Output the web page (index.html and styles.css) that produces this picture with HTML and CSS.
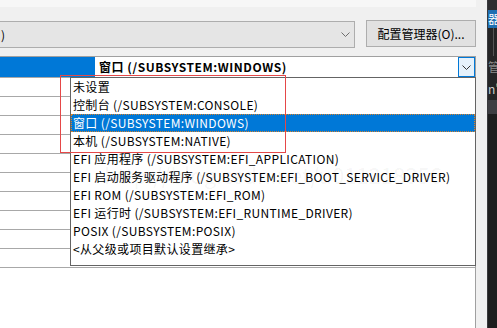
FILE: index.html
```html
<!DOCTYPE html>
<html lang="zh-CN">
<head>
  <meta charset="UTF-8" />
  <meta name="viewport" content="width=device-width, initial-scale=1.0" />
  <title>子系统</title>
  <link rel="stylesheet" href="styles.css">
</head>
<body>

  <div class="janela">
    <div class="principal">
      <div class="faixa-topo"></div>

      <!-- Barra de configuração -->
      <div class="barra">
        <div class="combo combo-plataforma">
          <span class="combo-texto">)</span>
          <svg class="seta" width="9" height="5" viewBox="0 0 9 5"><path d="M0.5 0.5 L4.5 4.5 L8.5 0.5" fill="none" stroke="#6d6d6d" stroke-width="1"/></svg>
        </div>
        <button class="botao">配置管理器(O)...</button>
      </div>

      <!-- Grade de propriedades -->
      <div class="grade">
        <div class="linha linha-ativa">
          <div class="nome nome-ativo"></div>
          <div class="valor">
            <span class="valor-texto">窗口 (/SUBSYSTEM:WINDOWS)</span>
            <span class="botao-seta">
              <svg width="9" height="5" viewBox="0 0 9 5"><path d="M0.5 0.5 L4.5 4.5 L8.5 0.5" fill="none" stroke="#333" stroke-width="1"/></svg>
            </span>
          </div>
        </div>
        <div class="linha"></div>
        <div class="linha"></div>
        <div class="linha"></div>
        <div class="linha"></div>
        <div class="linha"></div>
        <div class="linha"></div>
        <div class="linha"></div>
        <div class="linha"></div>
        <div class="linha"></div>
        <div class="linha"></div>
      </div>

      <!-- Lista aberta -->
      <ul class="lista">
        <li>未设置</li>
        <li>控制台 (/SUBSYSTEM:CONSOLE)</li>
        <li class="selecionado">窗口 (/SUBSYSTEM:WINDOWS)</li>
        <li>本机 (/SUBSYSTEM:NATIVE)</li>
        <li>EFI 应用程序 (/SUBSYSTEM:EFI_APPLICATION)</li>
        <li>EFI 启动服务驱动程序 (/SUBSYSTEM:EFI_BOOT_SERVICE_DRIVER)</li>
        <li>EFI ROM (/SUBSYSTEM:EFI_ROM)</li>
        <li>EFI 运行时 (/SUBSYSTEM:EFI_RUNTIME_DRIVER)</li>
        <li>POSIX (/SUBSYSTEM:POSIX)</li>
        <li>&lt;从父级或项目默认设置继承&gt;</li>
      </ul>

      <div class="marca">http://blog.csdn.net/u011218356</div>
      <div class="destaque"></div>
    </div>

    <!-- Painel escuro lateral -->
    <div class="painel">
      <div class="painel-topo"></div>
      <div class="painel-aba">器</div>
      <div class="painel-linhas"></div>
      <div class="painel-texto">管</div>
      <div class="painel-codigo">n<span class="aspas">"</span></div>
      <div class="painel-barra"></div>
      <div class="painel-fundo"></div>
    </div>
  </div>

</body>
</html>
```

FILE: styles.css
```css
body {
  margin: 0;
  font-family: "Noto Sans CJK SC", "Liberation Sans", sans-serif;
  font-size: 12px;
  background-color: #f0f0f0;
  overflow: hidden;
}

.janela {
  display: flex;
  width: 497px;
  height: 328px;
  overflow: hidden;
}

.principal {
  position: relative;
  width: 477px;
  padding-right: 11px;
  display: flex;
  flex-direction: column;
  background-color: #f0f0f0;
}

.faixa-topo {
  height: 7px;
  background-color: #f7f7f7;
}

/* Barra */
.barra {
  display: flex;
  align-items: flex-start;
  height: 49px;
  padding-top: 13px;
  box-sizing: border-box;
}

.combo {
  box-sizing: border-box;
  display: flex;
  align-items: center;
  justify-content: space-between;
}

.combo-plataforma {
  width: 357px;
  height: 27px;
  margin-left: -2px;
  margin-top: 1px;
  border: 1px solid #adadad;
  background-color: #e5e5e5;
  padding: 0 4px 0 2px;
}

.combo-texto {
  color: #000;
  line-height: 25px;
}

.botao {
  box-sizing: border-box;
  width: 110px;
  height: 27px;
  margin-left: 11px;
  border: 1px solid #adadad;
  background-color: #e1e1e1;
  font-family: inherit;
  font-size: 12px;
  color: #000;
  padding: 0;
}

/* Grade */
.grade {
  flex: 1;
  border-top: 1px solid #a0a0a0;
  border-right: 1px solid #a0a0a0;
  background-color: #fff;
}

.linha {
  height: 18px;
  border-bottom: 1px solid #a8a8a8;
  display: flex;
}

.linha-ativa {
  height: 20px;
}

.nome-ativo {
  width: 95px;
  background-color: #0078d7;
}

.valor {
  flex: 1;
  display: flex;
  align-items: center;
  justify-content: space-between;
}

.valor-texto {
  font-weight: bold;
  padding-left: 4px;
  letter-spacing: 0.55px;
  line-height: 20px;
}

.botao-seta {
  box-sizing: border-box;
  width: 17px;
  height: 20px;
  border: 1px solid #0078d7;
  background-color: #e5f1fb;
  display: flex;
  align-items: center;
  justify-content: center;
}

/* Lista */
.lista {
  position: absolute;
  left: 70px;
  top: 77px;
  width: 406px;
  height: 189px;
  box-sizing: border-box;
  margin: 0;
  padding: 0 0 7px 0;
  list-style: none;
  border: 1px solid #646464;
  background-color: #fff;
}

.lista li {
  height: 18px;
  line-height: 18px;
  padding-left: 2px;
  color: #000;
  letter-spacing: 0.35px;
  white-space: nowrap;
}

.lista .selecionado {
  background-color: #0078d7;
  color: #fff;
  outline: 1px dotted #d9822b;
  outline-offset: -1px;
}

.marca {
  position: absolute;
  left: 104px;
  top: 158px;
  font-size: 22px;
  color: rgba(0, 0, 0, 0.05);
  white-space: nowrap;
}

.destaque {
  position: absolute;
  left: 60px;
  top: 75px;
  width: 226px;
  height: 78px;
  box-sizing: border-box;
  border: 1px solid #e54848;
}

/* Painel escuro */
.painel {
  width: 9px;
  display: flex;
  flex-direction: column;
  background-color: #252526;
  overflow: hidden;
  border-left: 1px solid #3a3a3d;
}

.painel-topo {
  height: 10px;
  background-color: #2d2d30;
}

.painel-aba {
  height: 18px;
  background-color: #1f6fb2;
  color: #fff;
  line-height: 18px;
  white-space: nowrap;
}

.painel-linhas {
  height: 28px;
  border-right: 1px solid #555;
  width: 5px;
}

.painel-texto {
  height: 22px;
  color: #8a8a8a;
  line-height: 22px;
}

.painel-codigo {
  height: 22px;
  color: #ccc;
  line-height: 22px;
  white-space: nowrap;
}

.aspas {
  color: #d7ba7d;
}

.painel-barra {
  height: 14px;
  background-color: #3e3e42;
}

.painel-fundo {
  flex: 1;
  background-color: #1e1e1e;
}
```
